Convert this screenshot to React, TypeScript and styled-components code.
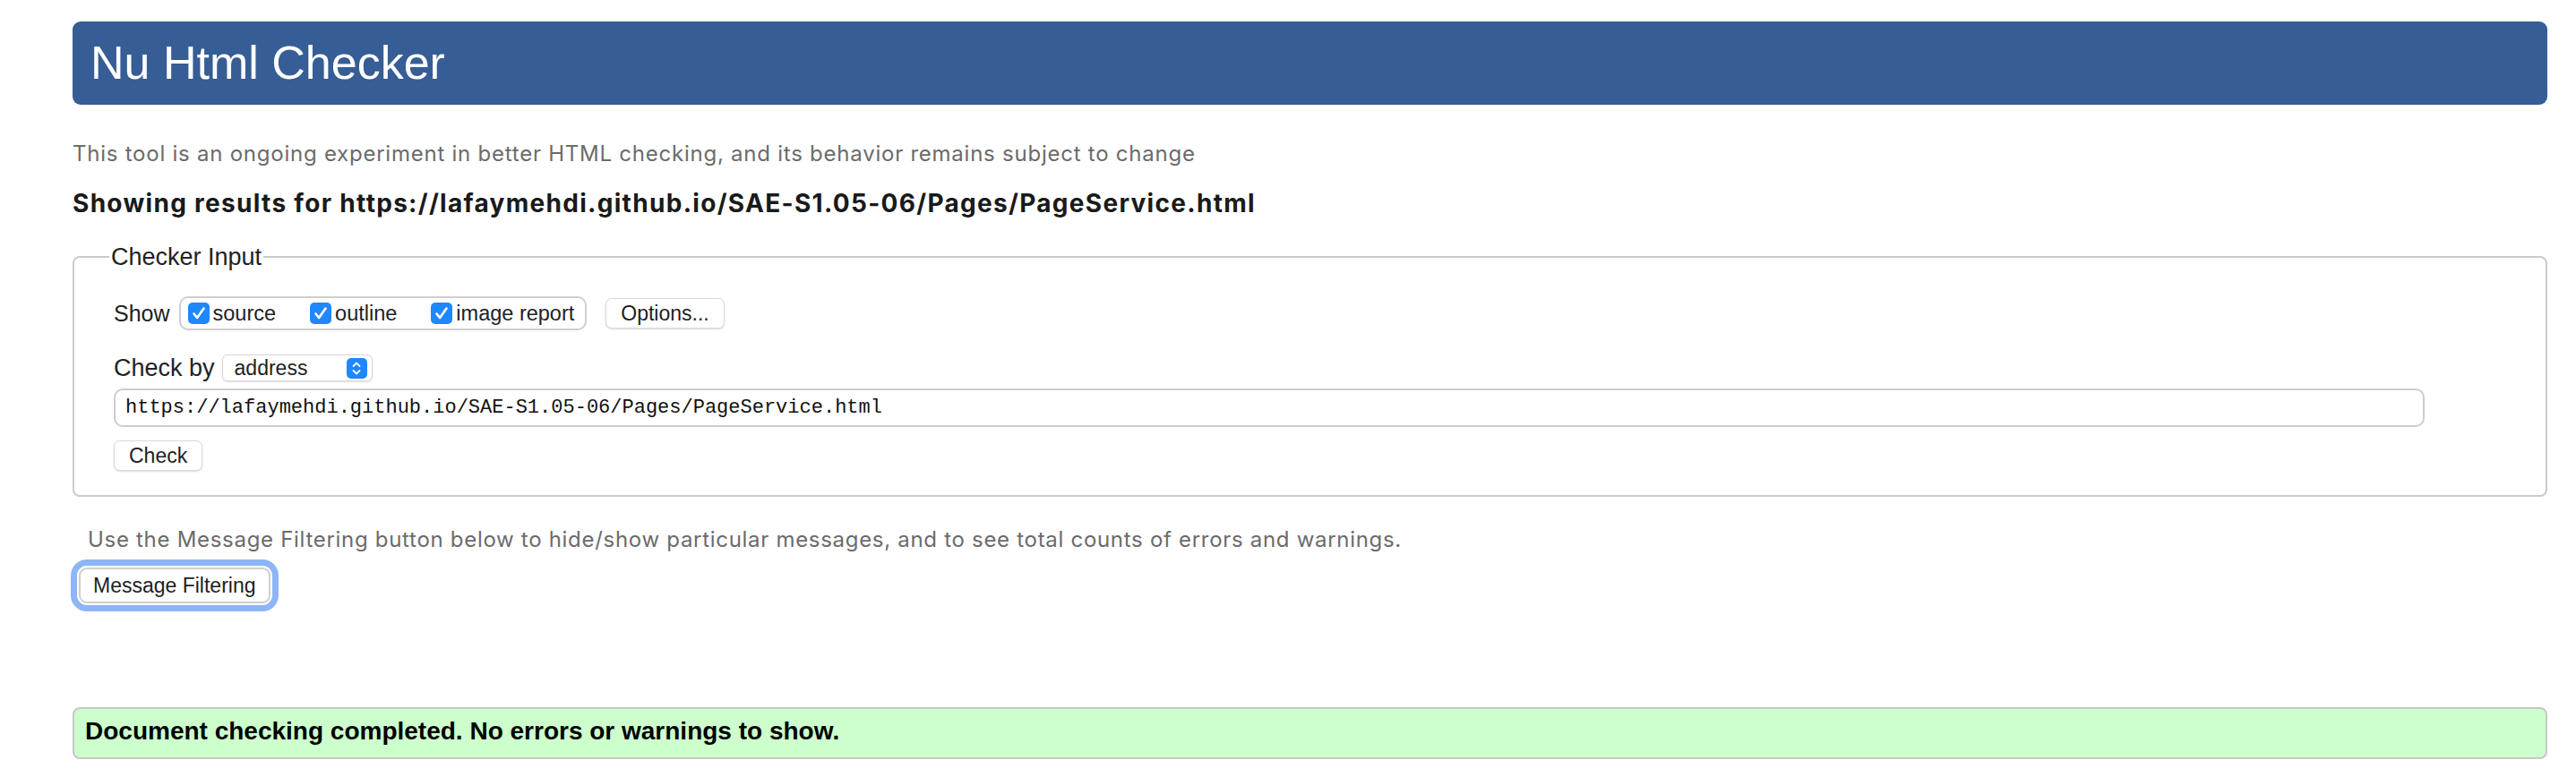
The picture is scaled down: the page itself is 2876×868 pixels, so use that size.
import styled, { createGlobalStyle } from "styled-components";

const GlobalStyle = createGlobalStyle`
  body {
    margin: 0;
    background: #fff;
    font-family: "Liberation Sans", Arial, sans-serif;
  }
`;

const Page = styled.div`
  padding: 24px 32px 20px 81px;
`;

const Banner = styled.h1`
  margin: 0;
  height: 93px;
  box-sizing: border-box;
  padding-left: 20px;
  display: flex;
  align-items: center;
  background: #365d95;
  color: #fff;
  border-radius: 9px;
  font-size: 52px;
  font-weight: 400;
  line-height: 1.15;
`;

const Intro = styled.p`
  margin: 40px 0 0;
  font-family: Inter, "Liberation Sans", sans-serif;
  font-size: 24px;
  letter-spacing: 0.76px;
  line-height: 30px;
  color: #6b6b6b;
`;

const ResultsTitle = styled.h2`
  margin: 23px 0 0;
  font-family: Inter, "Liberation Sans", sans-serif;
  font-size: 28px;
  letter-spacing: 1.3px;
  line-height: 34px;
  font-weight: 700;
  color: #1a1a1a;
`;

const Fieldset = styled.fieldset`
  margin: 28px 0 0;
  min-width: 0;
  border: 2px solid #cbcbcb;
  border-radius: 8px;
  padding: 29px 44px 27px 44px;
`;

const Legend = styled.legend`
  margin-left: -5px;
  padding: 0 2px;
  font-size: 27px;
  line-height: 30px;
  color: #222;
`;

const Row = styled.div<{ $height: number; $top?: number }>`
  display: flex;
  align-items: center;
  height: ${(p) => p.$height}px;
  margin-top: ${(p) => p.$top ?? 0}px;
`;

const RowLabel = styled.span<{ $size: number; $gap: number }>`
  font-size: ${(p) => p.$size}px;
  color: #222;
  margin-right: ${(p) => p.$gap}px;
`;

const CheckGroup = styled.div`
  display: flex;
  align-items: center;
  gap: 38px;
  height: 38px;
  box-sizing: border-box;
  padding: 0 12px 0 8px;
  border: 2px solid #cfcfcf;
  border-radius: 10px;
`;

const CheckOption = styled.label`
  display: flex;
  align-items: center;
  gap: 4px;
  font-size: 23.5px;
  color: #222;
`;

const CheckBox = styled.span`
  width: 24px;
  height: 24px;
  border-radius: 5px;
  background: #1f87ff;
  display: flex;
  align-items: center;
  justify-content: center;
`;

const Button = styled.button<{ $focused?: boolean }>`
  height: ${(p) => (p.$focused ? 40 : 34)}px;
  padding: 0 ${(p) => (p.$focused ? 14 : 16)}px;
  font-family: "Liberation Sans", Arial, sans-serif;
  font-size: 23px;
  color: #1e1e1e;
  background: #fff;
  border: ${(p) => (p.$focused ? "2px solid #cfcfcf" : "1px solid #dadada")};
  border-radius: ${(p) => (p.$focused ? 9 : 7)}px;
  box-shadow: ${(p) =>
    p.$focused
      ? "0 0 0 2px #fff, 0 0 0 9px #8db5f8"
      : "0 1px 2px rgba(0, 0, 0, 0.15)"};
  cursor: pointer;
`;

const OptionsButton = styled(Button)`
  margin-left: 21px;
`;

const FakeSelect = styled.div`
  width: 168px;
  height: 30px;
  box-sizing: border-box;
  display: flex;
  align-items: center;
  justify-content: space-between;
  padding: 0 5px 0 13px;
  border: 1px solid #d6d6d6;
  border-radius: 6px;
  box-shadow: 0 1px 2px rgba(0, 0, 0, 0.12);
  font-size: 23px;
  color: #1e1e1e;
`;

const SelectArrows = styled.span`
  width: 23px;
  height: 23px;
  border-radius: 5px;
  background: #1f87ff;
  display: flex;
  align-items: center;
  justify-content: center;
`;

const UrlInput = styled.input`
  display: block;
  margin-top: 8px;
  width: 2580px;
  height: 43px;
  box-sizing: border-box;
  padding: 0 11px;
  border: 2px solid #cdcdcd;
  border-radius: 10px;
  font-family: "Liberation Mono", "Courier New", monospace;
  font-size: 22px;
  color: #111;
  outline: none;
`;

const CheckRow = styled.div`
  margin-top: 15px;
`;

const Hint = styled.p`
  margin: 33px 0 0 17px;
  font-family: Inter, "Liberation Sans", sans-serif;
  font-size: 24px;
  letter-spacing: 0.7px;
  line-height: 30px;
  color: #6b6b6b;
`;

const FilterRow = styled.div`
  margin: 16px 0 0 7px;
`;

const Success = styled.div`
  margin-top: 116px;
  padding: 8px 12px 12px;
  border: 2px solid #c8c8c8;
  border-radius: 8px;
  background: #ccffcc;
  font-size: 28px;
  line-height: 34px;
  font-weight: 700;
  color: #000;
`;

const url = "https://lafaymehdi.github.io/SAE-S1.05-06/Pages/PageService.html";

const Tick = () => (
  <svg width="18" height="18" viewBox="0 0 18 18">
    <path
      d="M3.5 9.5l3.6 4.5L14.5 3.5"
      fill="none"
      stroke="#fff"
      strokeWidth="2.6"
      strokeLinecap="round"
      strokeLinejoin="round"
    />
  </svg>
);

const Arrows = () => (
  <svg width="14" height="19" viewBox="0 0 14 19">
    <path
      d="M3.5 7l3.5-3.5L10.5 7M3.5 12l3.5 3.5 3.5-3.5"
      fill="none"
      stroke="#fff"
      strokeWidth="1.8"
      strokeLinecap="round"
      strokeLinejoin="round"
    />
  </svg>
);

const showOptions = ["source", "outline", "image report"];

const App = () => {
  return (
    <>
      <GlobalStyle />
      <Page>
        <Banner>Nu Html Checker</Banner>
        <Intro>
          This tool is an ongoing experiment in better HTML checking, and its
          behavior remains subject to change
        </Intro>
        <ResultsTitle>Showing results for {url}</ResultsTitle>
        <Fieldset>
          <Legend>Checker Input</Legend>
          <Row $height={38}>
            <RowLabel $size={25} $gap={10}>
              Show
            </RowLabel>
            <CheckGroup>
              {showOptions.map((name) => (
                <CheckOption key={name}>
                  <CheckBox>
                    <Tick />
                  </CheckBox>
                  {name}
                </CheckOption>
              ))}
            </CheckGroup>
            <OptionsButton>Options...</OptionsButton>
          </Row>
          <Row $height={30} $top={27}>
            <RowLabel $size={27} $gap={8}>
              Check by
            </RowLabel>
            <FakeSelect role="combobox">
              address
              <SelectArrows>
                <Arrows />
              </SelectArrows>
            </FakeSelect>
          </Row>
          <UrlInput type="url" defaultValue={url} readOnly />
          <CheckRow>
            <Button>Check</Button>
          </CheckRow>
        </Fieldset>
        <Hint>
          Use the Message Filtering button below to hide/show particular
          messages, and to see total counts of errors and warnings.
        </Hint>
        <FilterRow>
          <Button $focused>Message Filtering</Button>
        </FilterRow>
        <Success>Document checking completed. No errors or warnings to show.</Success>
      </Page>
    </>
  );
};

export default App;
